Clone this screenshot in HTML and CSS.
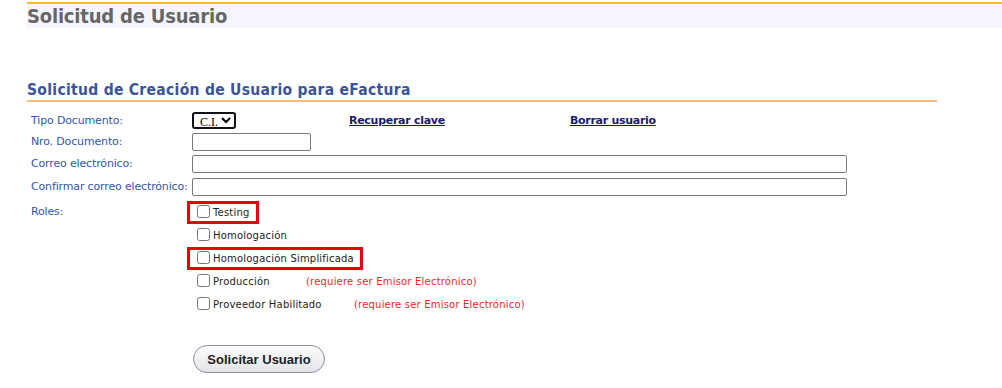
FILE: index.html
```html
<!DOCTYPE html>
<html lang="es">

<head>
    <meta charset="UTF-8">
    <meta name="viewport" content="width=device-width, initial-scale=1.0">
    <title>Solicitud de Usuario</title>
    <link rel="stylesheet" href="styles.css">
</head>

<body>
    <!-- cabezal -->
    <div class="page-title">
        <h1>Solicitud de Usuario</h1>
    </div>

    <div class="panel">
        <h2 class="panel-title">Solicitud de Creación de Usuario para eFactura</h2>

        <div class="form">
            <div class="row row-sm">
                <label class="lbl">Tipo Documento:</label>
                <div class="field field-links">
                    <select class="doc-type">
                        <option>C.I.</option>
                    </select>
                    <a href="#" class="link link-recover">Recuperar clave</a>
                    <a href="#" class="link link-delete">Borrar usuario</a>
                </div>
            </div>
            <div class="row row-sm">
                <label class="lbl">Nro. Documento:</label>
                <div class="field"><input type="text" class="txt txt-short"></div>
            </div>
            <div class="row">
                <label class="lbl">Correo electrónico:</label>
                <div class="field"><input type="text" class="txt txt-long"></div>
            </div>
            <div class="row">
                <label class="lbl">Confirmar correo electrónico:</label>
                <div class="field"><input type="text" class="txt txt-long"></div>
            </div>
            <div class="row row-roles">
                <label class="lbl">Roles:</label>
                <div class="roles">
                    <div class="role marked"><input type="checkbox"><span>Testing</span></div>
                    <div class="role"><input type="checkbox"><span>Homologación</span></div>
                    <div class="role marked"><input type="checkbox"><span>Homologación Simplificada</span></div>
                    <div class="role"><input type="checkbox"><span class="role-name w-prod">Producción</span><span class="req">(requiere ser Emisor Electrónico)</span></div>
                    <div class="role"><input type="checkbox"><span class="role-name w-prov">Proveedor Habilitado</span><span class="req">(requiere ser Emisor Electrónico)</span></div>
                </div>
            </div>
        </div>

        <div class="actions">
            <button type="button" class="btn">Solicitar Usuario</button>
        </div>
    </div>
</body>

</html>
```

FILE: styles.css
```css
body {
    margin: 0;
    background: #fff;
    font-family: "DejaVu Sans", Verdana, sans-serif;
}

/* cabezal */

.page-title {
    margin: 2px 0 0 27px;
    border-top: 2px solid #fbb829;
    background: #f5f6fd;
    height: 24px;
}

.page-title h1 {
    margin: 0;
    font-family: "DejaVu Sans Condensed", "DejaVu Sans", sans-serif;
    font-size: 20px;
    line-height: 24px;
    font-weight: bold;
    color: #666;
    letter-spacing: -0.2px;
}

/* formulario */

.panel {
    margin: 53px 0 0 27px;
    width: 910px;
}

.panel-title {
    margin: 0;
    font-family: "DejaVu Sans Condensed", "DejaVu Sans", sans-serif;
    font-size: 15.5px;
    line-height: 19px;
    font-weight: bold;
    color: #3a539b;
    border-bottom: 2px solid #fbbd7a;
    letter-spacing: 0.3px;
}

.form {
    margin-top: 8px;
}

.row {
    display: flex;
    align-items: center;
    height: 23px;
}

.row-sm {
    height: 21px;
}

.lbl {
    width: 161px;
    padding-left: 4px;
    font-size: 11px;
    color: #3355aa;
    letter-spacing: -0.15px;
}

.field {
    display: flex;
    align-items: center;
}

.doc-type {
    width: 44px;
    height: 17px;
    padding: 0 0 0 2px;
    border: 2px solid #111;
    border-radius: 3px;
    font-family: "Liberation Serif", serif;
    font-size: 12px;
    background: #fff;
}

.link {
    font-size: 11px;
    font-weight: bold;
    color: #1b1a6b;
    letter-spacing: -0.28px;
}

.link-recover {
    margin-left: 113px;
}

.link-delete {
    margin-left: 125px;
}

.txt {
    height: 18px;
    box-sizing: border-box;
    border: 1px solid #777;
    border-radius: 2px;
    padding: 0 2px;
}

.txt-short {
    width: 119px;
}

.txt-long {
    width: 655px;
}

/* roles */

.row-roles {
    height: auto;
    align-items: flex-start;
    margin-top: 3px;
}

.row-roles .lbl {
    padding-top: 4px;
}

.roles {
    display: flex;
    flex-direction: column;
    align-items: flex-start;
    margin-left: -5px;
}

.role {
    display: flex;
    align-items: center;
    height: 23px;
    padding: 0 6px 0 7px;
    font-size: 10px;
    color: #222;
    letter-spacing: 0.2px;
    border: 3px solid transparent;
    box-sizing: border-box;
}

.role.marked {
    border-color: #e8000b;
}

.role input {
    flex-shrink: 0;
    width: 13px;
    height: 13px;
    margin: -2px 3px 0 0;
}

.role-name {
    display: inline-block;
    flex-shrink: 0;
}

.w-prod {
    width: 93px;
}

.w-prov {
    width: 141px;
}

.req {
    color: #f21f1f;
}

.actions {
    margin: 29px 0 0 166px;
}

.btn {
    width: 132px;
    height: 28px;
    border: 1px solid #8a8fa0;
    border-radius: 14px;
    background: linear-gradient(#fdfdfd, #e3e4e8);
    font-family: "Liberation Sans", Arial, sans-serif;
    font-size: 13px;
    font-weight: bold;
    color: #222;
}
```
